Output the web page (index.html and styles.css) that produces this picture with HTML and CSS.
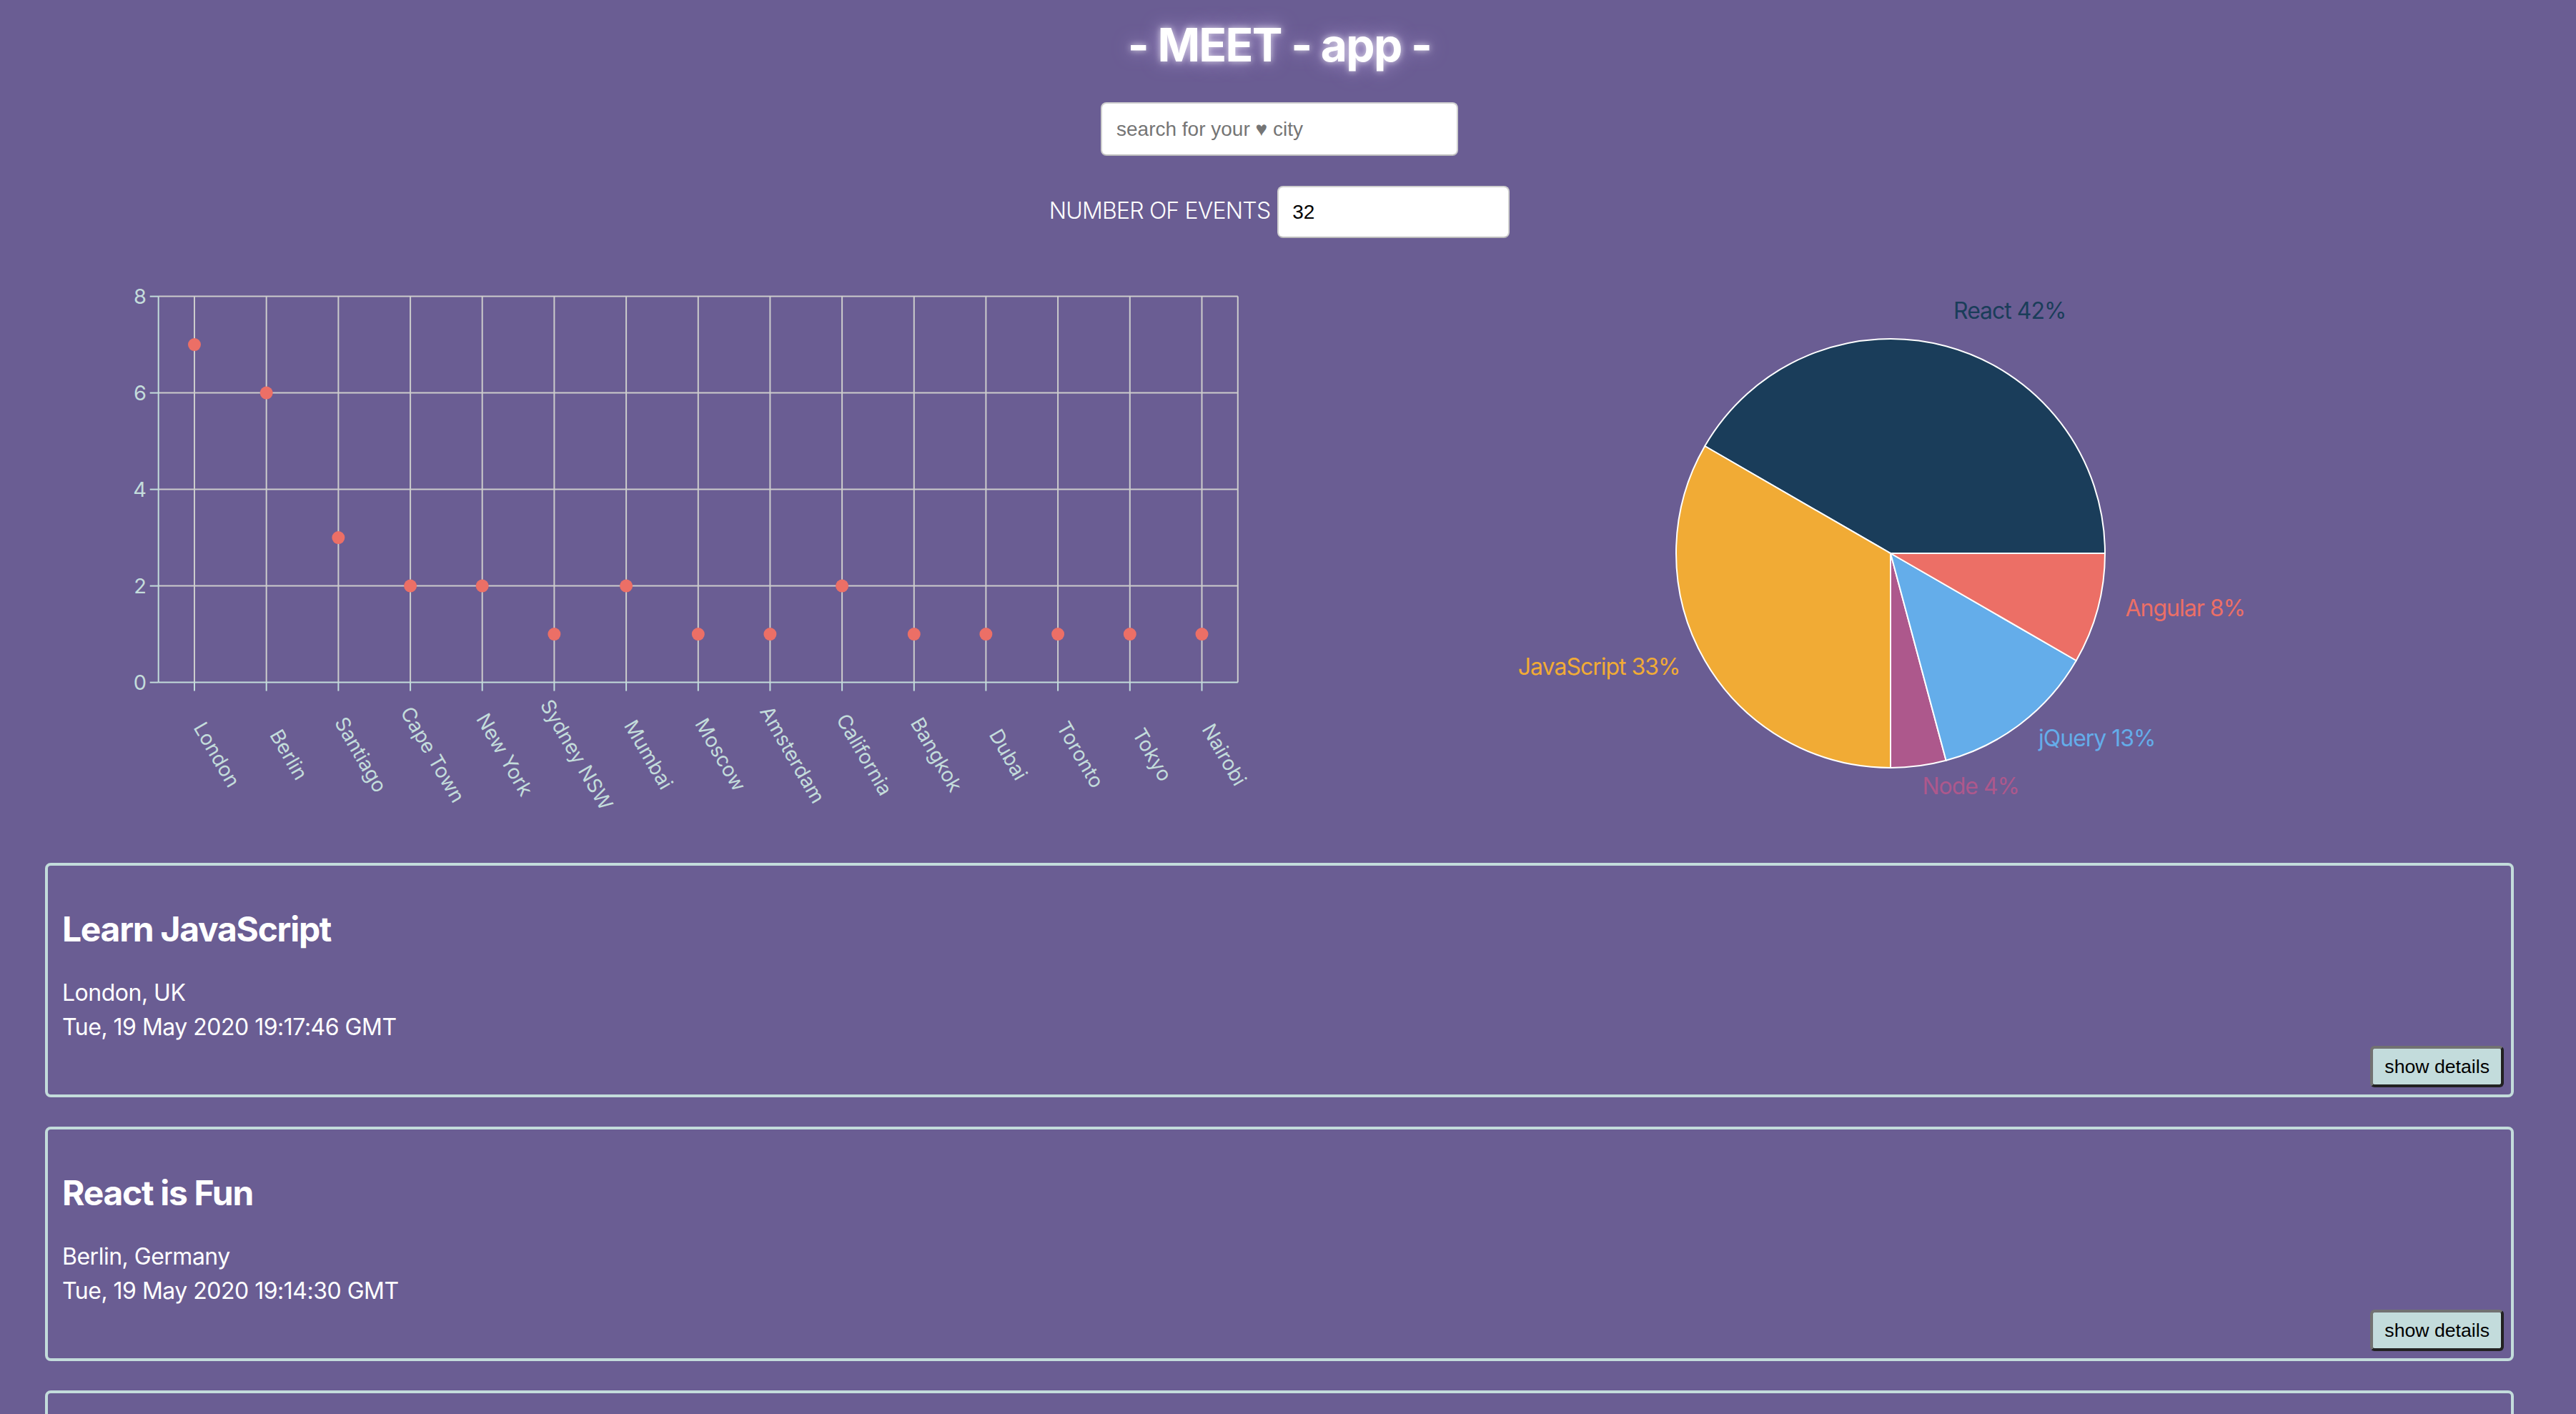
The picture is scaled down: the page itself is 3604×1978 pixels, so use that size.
FILE: index.html
```html
<!DOCTYPE html>
<html lang="en">
<head>
<meta charset="utf-8">
<title>Meet App</title>
<link rel="stylesheet" href="styles.css">
</head>
<body>
<div class="app">
  <h1 class="title">- MEET - app -</h1>

  <div class="city-search">
    <input class="city" type="text" placeholder="search for your ♥ city">
  </div>

  <div class="number-of-events">
    <label class="noe-label" for="noe">NUMBER OF EVENTS</label>
    <input class="noe-input" id="noe" type="text" value="32">
  </div>

  <div class="data-vis">
    <svg class="chart" width="1727" height="793" viewBox="0 0 1727 793">
      <g class="grid">
        <line x1="158.7" y1="40.6" x2="1668.8" y2="40.6"/>
        <line x1="158.7" y1="175.6" x2="1668.8" y2="175.6"/>
        <line x1="158.7" y1="310.6" x2="1668.8" y2="310.6"/>
        <line x1="158.7" y1="445.6" x2="1668.8" y2="445.6"/>
        <line x1="209" y1="40.6" x2="209" y2="580.6"/>
        <line x1="309.7" y1="40.6" x2="309.7" y2="580.6"/>
        <line x1="410.4" y1="40.6" x2="410.4" y2="580.6"/>
        <line x1="511.1" y1="40.6" x2="511.1" y2="580.6"/>
        <line x1="611.7" y1="40.6" x2="611.7" y2="580.6"/>
        <line x1="712.4" y1="40.6" x2="712.4" y2="580.6"/>
        <line x1="813.1" y1="40.6" x2="813.1" y2="580.6"/>
        <line x1="913.8" y1="40.6" x2="913.8" y2="580.6"/>
        <line x1="1014.4" y1="40.6" x2="1014.4" y2="580.6"/>
        <line x1="1115.1" y1="40.6" x2="1115.1" y2="580.6"/>
        <line x1="1215.8" y1="40.6" x2="1215.8" y2="580.6"/>
        <line x1="1316.4" y1="40.6" x2="1316.4" y2="580.6"/>
        <line x1="1417.1" y1="40.6" x2="1417.1" y2="580.6"/>
        <line x1="1517.8" y1="40.6" x2="1517.8" y2="580.6"/>
        <line x1="1618.5" y1="40.6" x2="1618.5" y2="580.6"/>
        <line x1="1668.8" y1="40.6" x2="1668.8" y2="580.6"/>
      </g>
      <g class="axis">
        <line x1="158.7" y1="40.6" x2="158.7" y2="580.6"/>
        <line x1="146.7" y1="40.6" x2="158.7" y2="40.6"/>
        <line x1="146.7" y1="175.6" x2="158.7" y2="175.6"/>
        <line x1="146.7" y1="310.6" x2="158.7" y2="310.6"/>
        <line x1="146.7" y1="445.6" x2="158.7" y2="445.6"/>
        <line x1="146.7" y1="580.6" x2="158.7" y2="580.6"/>
        <line x1="158.7" y1="580.6" x2="1668.8" y2="580.6"/>
        <line x1="209" y1="580.6" x2="209" y2="592.6"/>
        <line x1="309.7" y1="580.6" x2="309.7" y2="592.6"/>
        <line x1="410.4" y1="580.6" x2="410.4" y2="592.6"/>
        <line x1="511.1" y1="580.6" x2="511.1" y2="592.6"/>
        <line x1="611.7" y1="580.6" x2="611.7" y2="592.6"/>
        <line x1="712.4" y1="580.6" x2="712.4" y2="592.6"/>
        <line x1="813.1" y1="580.6" x2="813.1" y2="592.6"/>
        <line x1="913.8" y1="580.6" x2="913.8" y2="592.6"/>
        <line x1="1014.4" y1="580.6" x2="1014.4" y2="592.6"/>
        <line x1="1115.1" y1="580.6" x2="1115.1" y2="592.6"/>
        <line x1="1215.8" y1="580.6" x2="1215.8" y2="592.6"/>
        <line x1="1316.4" y1="580.6" x2="1316.4" y2="592.6"/>
        <line x1="1417.1" y1="580.6" x2="1417.1" y2="592.6"/>
        <line x1="1517.8" y1="580.6" x2="1517.8" y2="592.6"/>
        <line x1="1618.5" y1="580.6" x2="1618.5" y2="592.6"/>
      </g>
      <g class="y-ticks">
        <text x="142" y="40.6" dy="0.355em">8</text>
        <text x="142" y="175.6" dy="0.355em">6</text>
        <text x="142" y="310.6" dy="0.355em">4</text>
        <text x="142" y="445.6" dy="0.355em">2</text>
        <text x="142" y="580.6" dy="0.355em">0</text>
      </g>
      <g class="x-ticks">
        <text x="249" y="676.6" transform="rotate(60 249 676.6)"><tspan x="249" dy="0.71em">London</tspan></text>
        <text x="349.7" y="676.6" transform="rotate(60 349.7 676.6)"><tspan x="349.7" dy="0.71em">Berlin</tspan></text>
        <text x="450.4" y="676.6" transform="rotate(60 450.4 676.6)"><tspan x="450.4" dy="0.71em">Santiago</tspan></text>
        <text x="551.1" y="676.6" transform="rotate(60 551.1 676.6)"><tspan x="551.1" dy="0.71em">Cape Town</tspan></text>
        <text x="651.7" y="676.6" transform="rotate(60 651.7 676.6)"><tspan x="651.7" dy="0.71em">New York</tspan></text>
        <text x="752.4" y="676.6" transform="rotate(60 752.4 676.6)"><tspan x="752.4" dy="0.71em">Sydney NSW</tspan></text>
        <text x="853.1" y="676.6" transform="rotate(60 853.1 676.6)"><tspan x="853.1" dy="0.71em">Mumbai</tspan></text>
        <text x="953.8" y="676.6" transform="rotate(60 953.8 676.6)"><tspan x="953.8" dy="0.71em">Moscow</tspan></text>
        <text x="1054.4" y="676.6" transform="rotate(60 1054.4 676.6)"><tspan x="1054.4" dy="0.71em">Amsterdam</tspan></text>
        <text x="1155.1" y="676.6" transform="rotate(60 1155.1 676.6)"><tspan x="1155.1" dy="0.71em">California</tspan></text>
        <text x="1255.8" y="676.6" transform="rotate(60 1255.8 676.6)"><tspan x="1255.8" dy="0.71em">Bangkok</tspan></text>
        <text x="1356.4" y="676.6" transform="rotate(60 1356.4 676.6)"><tspan x="1356.4" dy="0.71em">Dubai</tspan></text>
        <text x="1457.1" y="676.6" transform="rotate(60 1457.1 676.6)"><tspan x="1457.1" dy="0.71em">Toronto</tspan></text>
        <text x="1557.8" y="676.6" transform="rotate(60 1557.8 676.6)"><tspan x="1557.8" dy="0.71em">Tokyo</tspan></text>
        <text x="1658.5" y="676.6" transform="rotate(60 1658.5 676.6)"><tspan x="1658.5" dy="0.71em">Nairobi</tspan></text>
      </g>
      <g class="dots">
        <circle cx="209" cy="108.1" r="9"/>
        <circle cx="309.7" cy="175.6" r="9"/>
        <circle cx="410.4" cy="378.1" r="9"/>
        <circle cx="511.1" cy="445.6" r="9"/>
        <circle cx="611.7" cy="445.6" r="9"/>
        <circle cx="712.4" cy="513.1" r="9"/>
        <circle cx="813.1" cy="445.6" r="9"/>
        <circle cx="913.8" cy="513.1" r="9"/>
        <circle cx="1014.4" cy="513.1" r="9"/>
        <circle cx="1115.1" cy="445.6" r="9"/>
        <circle cx="1215.8" cy="513.1" r="9"/>
        <circle cx="1316.4" cy="513.1" r="9"/>
        <circle cx="1417.1" cy="513.1" r="9"/>
        <circle cx="1517.8" cy="513.1" r="9"/>
        <circle cx="1618.5" cy="513.1" r="9"/>
      </g>
    </svg>

    <svg class="chart" width="1727" height="793" viewBox="0 0 1727 793">
      <g class="pie">
        <path class="s-react" d="M855 400 L1155 400 A300 300 0 0 0 595.19 250 Z"/>
        <path class="s-js" d="M855 400 L595.19 250 A300 300 0 0 0 855 700 Z"/>
        <path class="s-node" d="M855 400 L855 700 A300 300 0 0 0 932.65 689.78 Z"/>
        <path class="s-jquery" d="M855 400 L932.65 689.78 A300 300 0 0 0 1114.81 550 Z"/>
        <path class="s-angular" d="M855 400 L1114.81 550 A300 300 0 0 0 1155 400 Z"/>
      </g>
      <g class="pie-labels">
        <text class="l-react" x="943" y="71.6">React 42%</text>
        <text class="l-js end" x="560.5" y="570">JavaScript 33%</text>
        <text class="l-node" x="899.4" y="737.1">Node 4%</text>
        <text class="l-jquery" x="1062" y="669.7">jQuery 13%</text>
        <text class="l-angular" x="1183.4" y="488">Angular 8%</text>
      </g>
    </svg>
  </div>

  <ul class="event-list">
    <li class="event">
      <h2 class="event-title">Learn JavaScript</h2>
      <p class="event-location">London, UK</p>
      <p class="event-date">Tue, 19 May 2020 19:17:46 GMT</p>
      <button class="details-btn" type="button">show details</button>
    </li>
    <li class="event">
      <h2 class="event-title">React is Fun</h2>
      <p class="event-location">Berlin, Germany</p>
      <p class="event-date">Tue, 19 May 2020 19:14:30 GMT</p>
      <button class="details-btn" type="button">show details</button>
    </li>
    <li class="event">
      <h2 class="event-title">Node for Beginners</h2>
      <p class="event-location">Santiago, Chile</p>
      <p class="event-date">Wed, 20 May 2020 18:30:00 GMT</p>
      <button class="details-btn" type="button">show details</button>
    </li>
  </ul>
</div>
</body>
</html>
```

FILE: styles.css
```css
html {
  scrollbar-width: none;
}

body {
  margin: 0;
  background: #6a5d93;
  color: #ffffff;
  font-family: Inter, "Noto Sans", sans-serif;
}

.app {
  padding: 25px 87px 0 63px;
}

.title {
  margin: 0;
  text-align: center;
  font-size: 64px;
  line-height: 76px;
  font-weight: 700;
  letter-spacing: -1.7px;
  color: #ffffff;
  text-shadow: 0 0 10px rgba(255, 255, 255, 0.7), 0 0 26px rgba(205, 180, 245, 0.7);
}

.city-search {
  display: flex;
  justify-content: center;
  margin-top: 42px;
}

.city,
.noe-input {
  box-sizing: border-box;
  background: #ffffff;
  border: 2px solid #cfcfcf;
  border-bottom-color: #bdbdbd;
  border-radius: 8px;
  font-family: "Liberation Sans", Arial, sans-serif;
  font-size: 28px;
  color: #000000;
  outline: none;
  margin: 0;
}

.city {
  width: 500px;
  height: 75px;
  padding: 0 20px;
}

.city::placeholder {
  color: #757575;
}

.number-of-events {
  display: flex;
  justify-content: center;
  align-items: center;
  gap: 10px;
  margin-top: 42px;
}

.noe-label {
  font-size: 32px;
  line-height: 48px;
  font-weight: 300;
  letter-spacing: -0.8px;
  margin-bottom: 4px;
  color: #ffffff;
}

.noe-input {
  width: 325px;
  height: 73px;
  padding: 0 19px;
}

.data-vis {
  display: flex;
  margin-top: 41px;
  height: 793px;
}

.chart {
  flex: 1 1 0;
  display: block;
  height: 793px;
  overflow: visible;
}

.grid line {
  stroke: #cccccc;
  stroke-width: 2;
}

.axis line {
  stroke: #c3dcdb;
  stroke-width: 2;
}

.y-ticks text {
  fill: #c3dcdb;
  font-size: 29px;
  text-anchor: end;
}

.x-ticks text {
  fill: #c3dcdb;
  font-size: 28px;
  text-anchor: middle;
}

.dots circle {
  fill: #ec6f66;
}

.pie path {
  stroke: #ffffff;
  stroke-width: 2;
}

.s-react { fill: #1a3d5a; }
.s-js { fill: #f1ab35; }
.s-node { fill: #ad588c; }
.s-jquery { fill: #64adea; }
.s-angular { fill: #ec6f66; }

.pie-labels text {
  font-size: 32px;
  letter-spacing: -1px;
}

.pie-labels .end {
  text-anchor: end;
}

.l-react { fill: #1a3d5a; }
.l-js { fill: #f1ab35; }
.l-node { fill: #ad588c; }
.l-jquery { fill: #64adea; }
.l-angular { fill: #ec6f66; }

.event-list {
  list-style: none;
  margin: 40px 0 0;
  padding: 0;
}

.event {
  display: flex;
  flex-direction: column;
  border: 4px solid #c3dcdb;
  border-radius: 8px;
  padding: 20px 10px 10px 20px;
  margin-bottom: 41px;
}

.event-title {
  margin: 39.5px 0 36.5px;
  font-size: 48px;
  line-height: 58px;
  font-weight: 700;
  letter-spacing: -1.3px;
}

.event-location,
.event-date {
  margin: 0;
  font-size: 32px;
  line-height: 48px;
  letter-spacing: -0.5px;
}

.details-btn {
  align-self: flex-end;
  margin-top: 2px;
  box-sizing: border-box;
  height: 58px;
  padding: 0 16px;
  background: #c3dcdc;
  color: #000000;
  font-family: "Liberation Sans", Arial, sans-serif;
  font-size: 26.67px;
  line-height: 30px;
  border-width: 4px;
  border-style: solid;
  border-color: #727272 #222222 #222222 #727272;
  border-radius: 6px;
}
```
